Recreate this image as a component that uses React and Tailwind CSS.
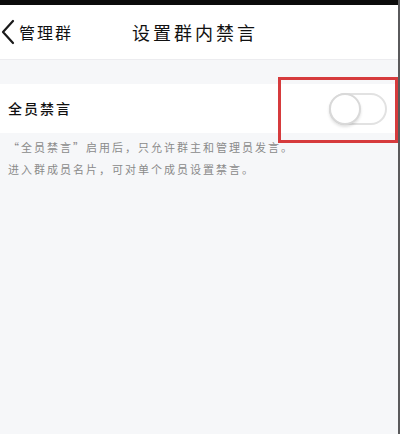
import React, { useState } from "react";

export default function App() {
  const [muteAll, setMuteAll] = useState(false);

  return (
    <div
      className="relative w-[400px] h-[434px] bg-[#f6f7f9] overflow-hidden"
      style={{ fontFamily: '"Noto Sans CJK SC", "Noto Sans", sans-serif' }}
    >
      {/* top status strip */}
      <div className="h-[5px] bg-[#0b0b0b]" />

      {/* nav bar */}
      <div className="relative h-[55px] bg-white border-b border-[#ececef] flex items-center">
        <div className="flex items-center pl-[1px]">
          <svg width="14" height="26" viewBox="0 0 14 26" fill="none">
            <path d="M12 2 L2 13 L12 24" stroke="#1a1a1a" strokeWidth="2.2" strokeLinecap="round" strokeLinejoin="round" />
          </svg>
          <span className="ml-[4px] text-[16px] tracking-[2px] text-[#111]">管理群</span>
        </div>
        <div className="absolute left-0 right-[10px] top-0 h-full flex items-center justify-center">
          <span className="text-[18px] tracking-[3px] text-[#111]">设置群内禁言</span>
        </div>
      </div>

      {/* spacer */}
      <div className="h-[24px]" />

      {/* switch row */}
      <div className="h-[49px] bg-white flex items-center justify-between pl-[8px] pr-[13px]">
        <span className="text-[14px] tracking-[2px] font-medium text-[#111]">全员禁言</span>
        <button
          onClick={() => setMuteAll(!muteAll)}
          className={
            "relative w-[58px] h-[32px] rounded-full border-2 " +
            (muteAll ? "bg-[#34c759] border-[#34c759]" : "bg-white border-[#e2e2e2]")
          }
        >
          <span
            className={
              "absolute top-[-2px] w-[32px] h-[32px] rounded-full bg-white border-2 border-[#d9d9d9] shadow-[0_2px_3px_rgba(0,0,0,0.12)] " +
              (muteAll ? "left-[24px]" : "left-[-2px]")
            }
          />
        </button>
      </div>

      {/* caption */}
      <div className="pl-[8px] pt-[3px] text-[11px] leading-[22px] tracking-[2px] text-[#8a8a8a]">
        <p>“全员禁言”启用后，只允许群主和管理员发言。</p>
        <p>进入群成员名片，可对单个成员设置禁言。</p>
      </div>

      {/* highlight box over the switch */}
      <div className="absolute left-[278px] top-[77px] w-[120px] h-[66px] border-[3px] border-[#d63b3d]" />

      {/* right edge line */}
      <div className="absolute right-0 top-0 w-[2px] h-full bg-[#5a5a5c]" />
    </div>
  );
}
